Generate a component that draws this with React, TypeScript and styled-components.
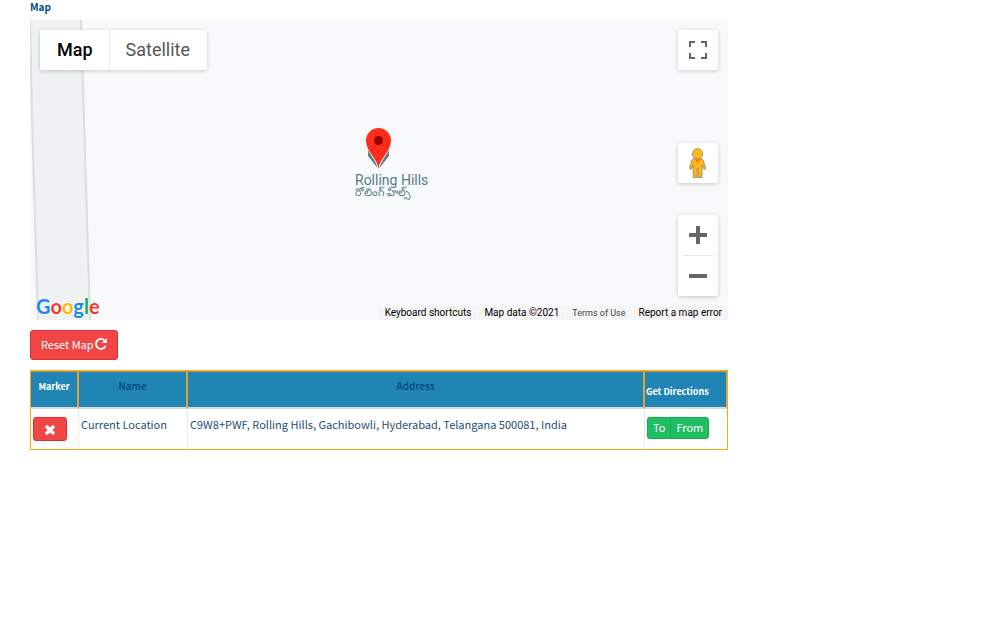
import React from 'react';
import styled, { createGlobalStyle } from 'styled-components';

const GlobalStyle = createGlobalStyle`
  * { box-sizing: border-box; }
  body { margin: 0; background: #fff; color: #1c5078; font-family: "Noto Sans CJK SC", "Noto Sans", sans-serif; font-size: 12px; }
  button { font-family: inherit; cursor: pointer; }
`;

const Page = styled.main`
  padding: 0 272px 0 30px;
`;

const Title = styled.h1`
  margin: 0;
  height: 20px;
  font-size: 10px;
  line-height: 14px;
  font-weight: 700;
  color: #004b85;
`;

const MapArea = styled.section`
  position: relative;
  height: 300px;
  overflow: hidden;
  background: #f8f9fb;
  font-family: Roboto, sans-serif;
`;

const Road = styled.svg`
  display: block;
`;

const MapTypes = styled.div`
  position: absolute;
  top: 10px;
  left: 10px;
  display: flex;
  border-radius: 2px;
  box-shadow: 0 1px 4px rgba(0, 0, 0, 0.2);
`;

const MapType = styled.button<{ $active?: boolean }>`
  height: 40px;
  padding: ${(p) => (p.$active ? '0 16px 0 17px' : '0 17px 0 16px')};
  border: 0;
  border-left: ${(p) => (p.$active ? '0' : '1px solid #ececec')};
  border-radius: 2px;
  background: #fff;
  color: ${(p) => (p.$active ? '#000' : '#565656')};
  font-size: 18px;
  line-height: 40px;
  font-weight: ${(p) => (p.$active ? 500 : 400)};
`;

const Controls = styled.div`
  position: absolute;
  top: 10px;
  right: 10px;
  bottom: 24px;
  display: flex;
  flex-direction: column;
`;

const ControlCard = styled.div<{ $gap?: number }>`
  display: flex;
  flex-direction: column;
  align-items: center;
  width: 40px;
  margin-top: ${(p) => p.$gap ?? 0}px;
  border-radius: 2px;
  background: #fff;
  box-shadow: 0 1px 4px rgba(0, 0, 0, 0.2);
`;

const IconButton = styled.button`
  display: flex;
  align-items: center;
  justify-content: center;
  width: 40px;
  height: 40px;
  padding: 0;
  border: 0;
  background: transparent;
`;

const Divider = styled.span`
  width: 30px;
  height: 1px;
  background: #e6e6e6;
`;

const Pin = styled.div`
  position: absolute;
  top: 108px;
  left: 325px;
  color: #547a88;
  text-shadow: 0 0 2px #fff, 0 0 2px #fff;

  svg { display: block; margin-left: 10px; }
`;

const PlaceName = styled.div`
  margin-top: 2px;
  font-size: 14px;
  line-height: 14px;
`;

const PlaceLocal = styled.div`
  font-size: 11px;
  line-height: 12px;
`;

const Google = styled.a`
  position: absolute;
  left: 6px;
  bottom: 0;
  font-family: Lato, sans-serif;
  font-size: 20px;
  line-height: 28px;
  font-weight: 700;
  text-decoration: none;
  text-shadow: 0 0 2px #fff, 0 0 2px #fff;
`;

const Letter = styled.span<{ $color: string }>`
  color: ${(p) => p.$color};
`;

const Legal = styled.div`
  position: absolute;
  right: 0;
  bottom: 0;
  display: flex;
  gap: 1px;
`;

const legalItem = `
  height: 14px;
  padding: 0 6px;
  border: 0;
  background: #f5f5f5;
  color: #000;
  font-size: 10px;
  line-height: 14px;
  text-decoration: none;
`;
const LegalButton = styled.button`${legalItem}`;
const LegalText = styled.span`${legalItem}`;
const LegalLink = styled.a<{ $soft?: boolean }>`
  ${legalItem}
  color: ${(p) => (p.$soft ? '#444' : '#000')};
  font-size: ${(p) => (p.$soft ? 9 : 10)}px;
`;

const ActionButton = styled.button`
  display: inline-flex;
  align-items: center;
  justify-content: center;
  border: 1px solid #e52b2b;
  border-radius: 3px;
  background: #f04646;
  color: #fff;
  font-size: 11px;
  line-height: 16px;
`;

const ResetButton = styled(ActionButton)`
  display: flex;
  gap: 1px;
  height: 30px;
  margin: 10px 0;
  padding: 0 10px 3px;
`;

const RemoveButton = styled(ActionButton)`
  width: 34px;
  height: 24px;
  padding: 2px 0 0;
`;

const Table = styled.table`
  width: 100%;
  table-layout: fixed;
  border-collapse: separate;
  border-spacing: 0;
  border: 1px solid #faa719;
`;

const Col = styled.col<{ $width?: number }>`
  width: ${(p) => (p.$width ? `${p.$width}px` : 'auto')};
`;

const Head = styled.th<{ $light?: boolean; $low?: boolean }>`
  height: 38px;
  padding: ${(p) => (p.$low ? '12px 1px 0' : '7px 1px 0')};
  border-top: 1px solid #b99a4e;
  border-right: 2px solid #e0a334;
  border-bottom: 2px solid #dcdcdf;
  background: #2085b5;
  color: ${(p) => (p.$light ? '#fff' : '#004680')};
  font-size: ${(p) => (p.$light ? 9 : 10)}px;
  line-height: ${(p) => (p.$light ? 16 : 14)}px;
  font-weight: ${(p) => (p.$light ? 700 : 500)};
  text-align: ${(p) => (p.$low ? 'left' : 'center')};
  vertical-align: top;
  white-space: nowrap;

  &:last-child { border-right-width: 1px; }
`;

const Cell = styled.td`
  height: 40px;
  padding: 8px 2px 0;
  border-right: 1px solid #ececec;
  font-size: 11px;
  line-height: 14px;
  vertical-align: top;

  &:last-child { border-right: 0; }
`;

const Group = styled.div`
  display: inline-flex;
`;

const Direction = styled.button`
  height: 22px;
  padding: 0 5px 2px;
  border: 1px solid #0fae52;
  background: #20bd62;
  color: #fff;
  font-size: 11px;
  line-height: 18px;

  &:first-child { border-radius: 3px 0 0 3px; border-right: 0; }
  &:last-child { border-radius: 0 3px 3px 0; }
`;

const logo: [string, string][] = [
  ['G', '#1a86f5'], ['o', '#f5392c'], ['o', '#fdbb07'],
  ['g', '#1a86f5'], ['l', '#18a85b'], ['e', '#f5392c'],
];

export default function App() {
  return (
    <>
      <GlobalStyle />
      <Page>
        <Title>Map</Title>
        <MapArea aria-label="Map">
          <Road width="70" height="300" viewBox="0 0 70 300">
            <path d="M0 0H51L60 300H8Z" fill="#eef2f3" />
            <path d="M0 0L2 100L8 300M51 0L60 300" fill="none" stroke="#d9dee0" strokeWidth="2" />
          </Road>
          <MapTypes>
            <MapType $active>Map</MapType>
            <MapType>Satellite</MapType>
          </MapTypes>
          <Pin>
            <svg width="27" height="43" viewBox="0 0 27 43">
              <path d="M3 21V28L12.500 40L13.500 41L14.500 40L24 28V21L13.500 36Z" fill="#607d8b" />
              <path d="M13.500 41C12.500 30 1 24 1 12.500A12.500 12.500 0 0 1 26 12.500C26 24 14.500 30 13.500 41Z" fill="#ff2d1a" stroke="#f8f9fb" strokeWidth="1.600" paintOrder="stroke" />
              <circle cx="13.500" cy="12.500" r="4.500" fill="#900" />
            </svg>
            <PlaceName>Rolling Hills</PlaceName>
            <PlaceLocal lang="te">రోలింగ్ హిల్స్</PlaceLocal>
          </Pin>
          <Controls>
            <ControlCard>
              <IconButton aria-label="Toggle fullscreen view">
                <svg width="18" height="18" viewBox="0 0 18 18" fill="#666">
                  <path d="M0 0v6h2V2h4V0zM12 0v2h4v4h2V0zM0 12v6h6v-2H2v-4zM16 12v4h-4v2h6v-6z" />
                </svg>
              </IconButton>
            </ControlCard>
            <ControlCard $gap={73}>
              <IconButton aria-label="Street view">
                <svg width="18" height="32" viewBox="0 0 18 32">
                  <path d="M5 11.500H12L14 13L16.800 21.500L15 22.500L13 18V30.500H9V21H8.200V30.500H4.200V18L2.200 22.500L.4 21.500L3 13Z" fill="#fdb91a" stroke="#92836a" strokeWidth=".8" />
                  <path d="M5.500 11.500H12L8.700 16.500Z" fill="#f58220" />
                  <circle cx="8.600" cy="6.800" r="5.200" fill="#fdb91a" stroke="#92836a" strokeWidth=".8" />
                </svg>
              </IconButton>
            </ControlCard>
            <ControlCard $gap={32}>
              <IconButton aria-label="Zoom in">
                <svg width="18" height="18" viewBox="0 0 18 18"><path d="M7 0h4v7h7v4h-7v7H7v-7H0V7h7z" fill="#666" /></svg>
              </IconButton>
              <Divider />
              <IconButton aria-label="Zoom out">
                <svg width="18" height="18" viewBox="0 0 18 18"><path d="M0 7h18v4H0z" fill="#666" /></svg>
              </IconButton>
            </ControlCard>
          </Controls>
          <Google href="#google" aria-label="Google">
            {logo.map(([c, color], i) => <Letter key={i} $color={color}>{c}</Letter>)}
          </Google>
          <Legal>
            <LegalButton>Keyboard shortcuts</LegalButton>
            <LegalText>Map data ©2021</LegalText>
            <LegalLink $soft href="#terms">Terms of Use</LegalLink>
            <LegalLink href="#report">Report a map error</LegalLink>
          </Legal>
        </MapArea>
        <ResetButton>
          Reset Map
          <svg width="12" height="12" viewBox="0 0 12 12" fill="none" stroke="#fff" strokeWidth="1.800">
            <path d="M10.400 8.200A5 5 0 1 1 9.600 2.500" />
            <path d="M11.800 0V5H6.800Z" fill="#fff" stroke="none" />
          </svg>
        </ResetButton>
        <Table>
          <colgroup>
            <Col $width={48} />
            <Col $width={109} />
            <Col />
            <Col $width={82} />
          </colgroup>
          <thead>
            <tr>
              <Head $light>Marker</Head>
              <Head>Name</Head>
              <Head>Address</Head>
              <Head $light $low>Get Directions</Head>
            </tr>
          </thead>
          <tbody>
            <tr>
              <Cell>
                <RemoveButton aria-label="Remove marker">
                  <svg width="12" height="12" viewBox="0 0 12 12"><path d="M2 2L10 10M10 2L2 10" stroke="#fff" strokeWidth="3.400" /></svg>
                </RemoveButton>
              </Cell>
              <Cell>Current Location</Cell>
              <Cell>C9W8+PWF, Rolling Hills, Gachibowli, Hyderabad, Telangana 500081, India</Cell>
              <Cell>
                <Group>
                  <Direction>To</Direction>
                  <Direction>From</Direction>
                </Group>
              </Cell>
            </tr>
          </tbody>
        </Table>
      </Page>
    </>
  );
}
